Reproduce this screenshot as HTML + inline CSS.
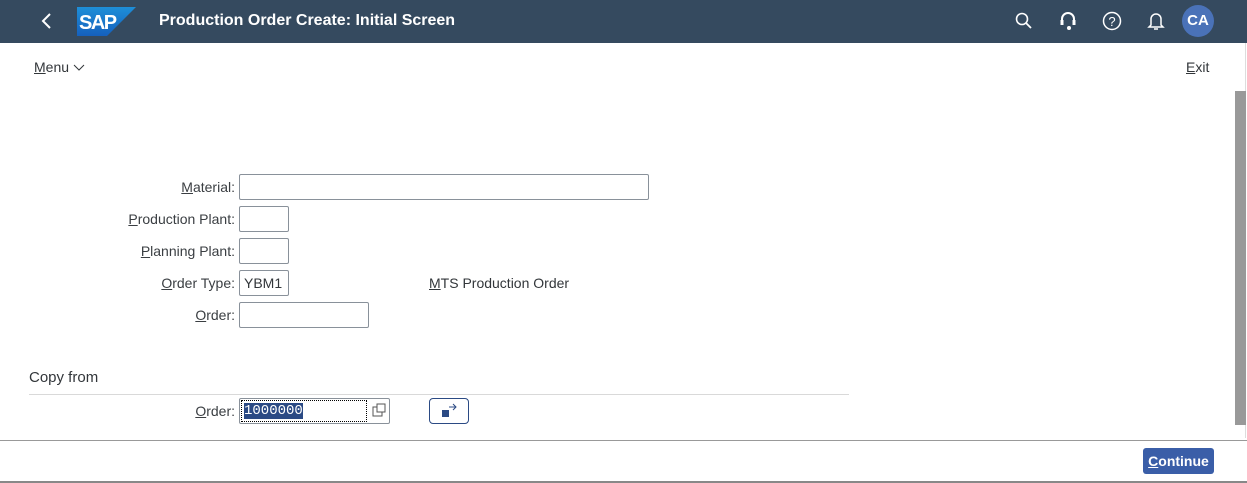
<!DOCTYPE html>
<html><head><style>
*{margin:0;padding:0;box-sizing:border-box}
body{width:1247px;height:483px;overflow:hidden;background:#fff;font-family:"Liberation Sans",sans-serif;position:relative;color:#32363a}
.hdr{position:absolute;left:0;top:0;width:1247px;height:43px;background:#354a5f}
.abs{position:absolute}
.lbl{position:absolute;font-size:14px;color:#3a3e42;text-align:right;width:200px}
.inp{position:absolute;border:1px solid #89919a;border-radius:2px;height:26px;background:#fff;font-size:14px;padding:4px 4px;color:#32363a}
u{text-decoration:underline}
</style></head><body>
<div class="hdr">
<svg class="abs" style="left:40px;top:13px" width="14" height="16"><path d="M10 1 L3 8 L10 15" stroke="#fff" stroke-width="2" fill="none"/></svg>
<svg class="abs" style="left:77px;top:7px" width="59" height="29"><defs><linearGradient id="g" x1="0" y1="0" x2="0" y2="1"><stop offset="0" stop-color="#1e8fd8"/><stop offset="1" stop-color="#1560bd"/></linearGradient></defs><path d="M0 0H59L30 29H0Z" fill="url(#g)"/><text x="2" y="22" font-family="Liberation Sans" font-weight="bold" font-size="20" fill="#fff" letter-spacing="-1.5">SAP</text></svg>
<div class="abs" style="left:159px;top:12px;color:#fff;font-weight:bold;font-size:16px">Production Order Create: Initial Screen</div>
<svg class="abs" style="left:1015px;top:12px" width="18" height="18"><circle cx="7" cy="7" r="5.5" stroke="#fff" stroke-width="1.6" fill="none"/><path d="M11 11L16 16" stroke="#fff" stroke-width="1.8"/></svg>
<svg class="abs" style="left:1059px;top:11px" width="18" height="20"><path d="M3 12V8a6 6 0 0 1 12 0v4" stroke="#fff" stroke-width="2" fill="none"/><rect x="1.5" y="9" width="3" height="5" fill="#fff"/><rect x="13.5" y="9" width="3" height="5" fill="#fff"/><circle cx="10" cy="17" r="2" fill="#fff"/></svg>
<svg class="abs" style="left:1102px;top:11px" width="20" height="20"><circle cx="10" cy="10" r="8.5" stroke="#fff" stroke-width="1.5" fill="none"/><text x="10" y="15" text-anchor="middle" font-size="13" fill="#fff" font-family="Liberation Sans">?</text></svg>
<svg class="abs" style="left:1147px;top:11px" width="18" height="20"><path d="M4 14V8a5 5 0 0 1 10 0v6l2 2H2z" stroke="#fff" stroke-width="1.5" fill="none"/><path d="M7 18h4" stroke="#fff" stroke-width="1.5"/></svg>
<div class="abs" style="left:1182px;top:5px;width:32px;height:32px;border-radius:50%;background:#4a72b8;color:#fff;font-weight:bold;font-size:15px;text-align:center;line-height:32px">CA</div>
</div>
<div class="abs" style="left:34px;top:59px;font-size:14px;color:#32363a"><u>M</u>enu <svg width="12" height="8"><path d="M1 1L6 6L11 1" stroke="#32363a" fill="none"/></svg></div>
<div class="abs" style="left:1186px;top:59px;font-size:14px"><u>E</u>xit</div>
<div class="abs" style="left:1245px;top:43px;width:1px;height:395px;background:#ddd"></div>
<div class="abs" style="left:1235px;top:91px;width:11px;height:334px;background:#999"></div>

<div class="lbl" style="left:35px;top:179px"><u>M</u>aterial:</div>
<div class="inp" style="left:239px;top:174px;width:410px"></div>
<div class="lbl" style="left:35px;top:211px"><u>P</u>roduction Plant:</div>
<div class="inp" style="left:239px;top:206px;width:50px"></div>
<div class="lbl" style="left:35px;top:243px"><u>P</u>lanning Plant:</div>
<div class="inp" style="left:239px;top:238px;width:50px"></div>
<div class="lbl" style="left:35px;top:275px"><u>O</u>rder Type:</div>
<div class="inp" style="left:239px;top:270px;width:50px">YBM1</div>
<div class="abs" style="left:429px;top:275px;font-size:14px"><u>M</u>TS Production Order</div>
<div class="lbl" style="left:35px;top:307px"><u>O</u>rder:</div>
<div class="inp" style="left:239px;top:302px;width:130px"></div>

<div class="abs" style="left:29px;top:369px;font-size:15px">Copy from</div>
<div class="abs" style="left:29px;top:394px;width:820px;height:1px;background:#d9d9d9"></div>
<div class="lbl" style="left:35px;top:403px"><u>O</u>rder:</div>
<div class="inp" style="left:239px;top:398px;width:151px;padding:0"></div>
<div class="abs" style="left:241px;top:400px;width:126px;height:22px;border:1px dotted #000"></div>
<div class="abs" style="left:244px;top:403px;height:16px;background:#2b4a84;color:#fff;font-family:'Liberation Mono',monospace;font-size:14px;line-height:16px">1000000</div>
<svg class="abs" style="left:372px;top:403px" width="15" height="15"><rect x="1" y="4" width="9" height="9" stroke="#555" fill="none"/><rect x="5" y="1" width="8" height="8" stroke="#555" fill="#fff"/></svg>
<div class="abs" style="left:429px;top:398px;width:40px;height:26px;border:1px solid #2b4a84;border-radius:4px"></div>
<svg class="abs" style="left:440px;top:403px" width="20" height="16"><rect x="2" y="7" width="7" height="7" fill="#2b4a84"/><path d="M9 4H16M13 1L16 4L13 7" stroke="#2b4a84" fill="none"/></svg>

<div class="abs" style="left:0;top:440px;width:1247px;height:1px;background:#999"></div>
<div class="abs" style="left:0;top:481px;width:1247px;height:2px;background:#888"></div>
<div class="abs" style="left:1143px;top:448px;width:71px;height:26px;background:#3a5ea8;border-radius:3px;color:#fff;font-weight:bold;font-size:14px;text-align:center;line-height:26px"><u>C</u>ontinue</div>
</body></html>
